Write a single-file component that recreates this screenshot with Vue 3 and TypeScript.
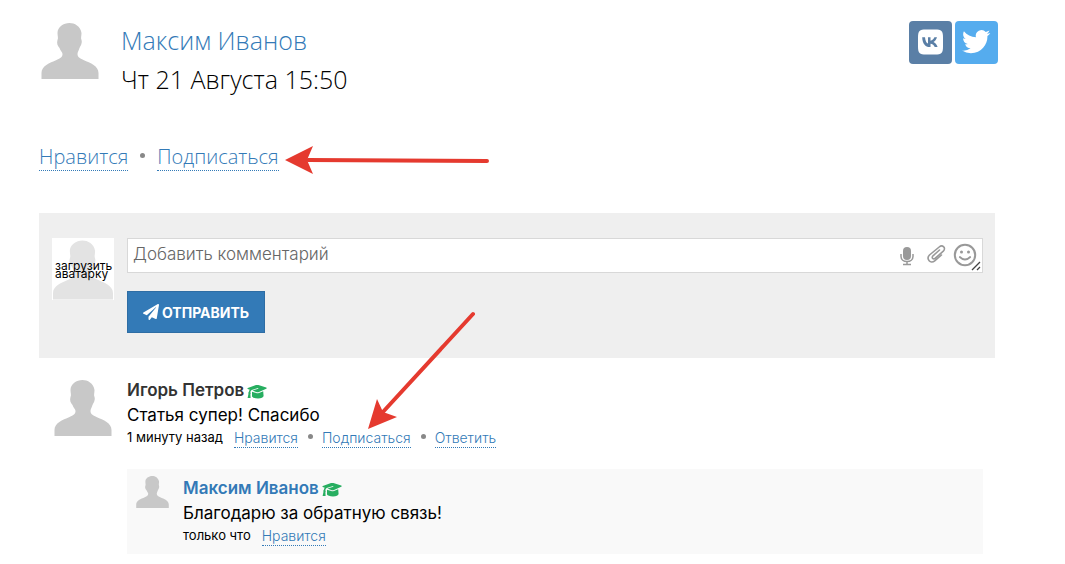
<script setup lang="ts">
import { ref } from 'vue'

const draft = ref('')
const articleActions: string[] = ['Нравится', 'Подписаться']
const commentActions: string[] = ['Нравится', 'Подписаться', 'Ответить']
</script>

<template>
  <main class="page">
    <svg class="defs" aria-hidden="true">
      <symbol id="person" viewBox="0 0 57 56">
        <path d="M28 0C33 0 39 3 40 10C40 13 39 15 40 17C41 20 39 23 38 25C37 28 36 29 36 31C36 34 38 35 42 37C49 40 57 43 57 50V56H0V50C0 43 8 40 15 37C19 35 21 34 21 31C21 29 19 28 18 25C16 23 15 20 16 17C17 15 16 13 16 10C16 4 22 0 28 0Z" />
      </symbol>
      <symbol id="cap" viewBox="0 0 20 15">
        <path d="M.8 4L9 1.100Q10.200 .7 11.400 1.100L19.200 3.600Q20.200 4.200 19.200 4.800L12 8Q10.600 8.500 9.200 8L5.500 6.600L11.400 4.700L11.100 4.100L4.600 5.900Q3.500 6.700 3.300 8.200Q4.200 9 3.400 9.900L3.600 14H.6L1.500 9.800Q.9 8.800 1.800 8.100Q1.900 6.600 2.800 5.700L.8 5.100Q0 4.500 .8 4ZM5 7.700L9.200 9.100Q10.600 9.500 12 9L16.200 7.200L16.600 12Q16 14.200 11 14.400Q6 14.300 5 12.500Z" />
      </symbol>
    </svg>

    <header class="head">
      <svg class="avatar" aria-hidden="true"><use href="#person" /></svg>
      <div class="who">
        <a href="#author">Максим Иванов</a>
        <time>Чт 21 Августа 15:50</time>
      </div>
      <nav class="share">
        <a class="vk" href="#vk" aria-label="ВКонтакте">
          <svg viewBox="0 0 43 43" aria-hidden="true">
            <path fill="#fff" d="M17 8.500H26C32.500 8.500 34 10 34 16.500V25.500C34 32 32.500 33.500 26 33.500H17C10.500 33.500 9 32 9 25.500V16.500C9 10 10.500 8.500 17 8.500Z" />
            <path fill="#5a7fa6" d="M13.200 16.200H16C16.300 20.200 17.600 22.100 19 22.600V16.200H21.500V19.700C23.200 19.500 24.700 17.900 25.400 16.200H28C27.400 18.500 25.900 20.200 24.500 21.100C26.100 21.900 27.800 23.400 28.600 26H25.700C25 24.200 23.500 22.900 21.500 22.700V26H20.800C16.300 26 13.400 22.600 13.200 16.200Z" />
          </svg>
        </a>
        <a class="tw" href="#twitter" aria-label="Twitter">
          <svg viewBox="0 0 43 43" aria-hidden="true">
            <path fill="#fff" transform="translate(7 6.500) scale(1.180)" d="M23.950 4.570a10 10 0 0 1-2.820.770 4.960 4.960 0 0 0 2.160-2.720c-.950.550-2 .950-3.130 1.180a4.920 4.920 0 0 0-8.380 4.480C7.690 8.090 4.070 6.130 1.640 3.160a4.820 4.820 0 0 0-.670 2.480c0 1.710.870 3.210 2.190 4.100a4.900 4.900 0 0 1-2.230-.620v.060a4.920 4.920 0 0 0 3.950 4.830 5 5 0 0 1-2.210.080 4.940 4.940 0 0 0 4.600 3.420A9.870 9.870 0 0 1 0 19.540a13.990 13.990 0 0 0 7.550 2.210c9.050 0 14-7.500 14-13.980 0-.210 0-.420-.020-.630a9.940 9.940 0 0 0 2.460-2.550z" />
          </svg>
        </a>
      </nav>
    </header>

    <div class="article-actions">
      <a v-for="item in articleActions" :key="item" href="#article">{{ item }}</a>
    </div>

    <form class="composer" @submit.prevent>
      <button type="button" class="upload">
        <svg aria-hidden="true"><use href="#person" /></svg>
        <span>загрузить аватарку</span>
      </button>
      <div class="fields">
        <div class="box">
          <textarea v-model="draft" rows="1" aria-label="Добавить комментарий" placeholder="Добавить комментарий"></textarea>
          <button type="button" class="tool mic" aria-label="Голосовой ввод">
            <svg viewBox="0 0 14 20" width="14" height="20" aria-hidden="true">
              <rect x="3" y="1" width="8" height="13" rx="4" fill="#999" />
              <path d="M1 8V10.500C1 13.500 3.500 15.500 7 15.500S13 13.500 13 10.500V8M7 15.500V18M3 18.500H11" fill="none" stroke="#999" stroke-width="1.500" />
            </svg>
          </button>
          <button type="button" class="tool clip" aria-label="Прикрепить файл">
            <svg viewBox="0 0 20 20" width="20" height="20" aria-hidden="true">
              <path d="M13.500 6L7 11.800C5 13.800 7.300 16 9.300 14.200L17.300 7.200C20.500 4 16.500 .2 13.200 3L3.500 11C-.2 14.800 4.500 20.500 8.700 16.800L15.500 11" fill="none" stroke="#999" stroke-width="1.600" stroke-linecap="round" />
            </svg>
          </button>
          <button type="button" class="tool smile" aria-label="Смайлы">
            <svg viewBox="0 0 24 24" width="24" height="24" aria-hidden="true">
              <circle cx="12" cy="12" r="10.200" fill="none" stroke="#999" stroke-width="2" />
              <circle cx="8.500" cy="9" r="1.500" fill="#999" />
              <circle cx="15.500" cy="9" r="1.500" fill="#999" />
              <path d="M6.800 14Q12 19 17.200 14" fill="none" stroke="#999" stroke-width="1.800" stroke-linecap="round" />
            </svg>
          </button>
          <svg class="grip" viewBox="0 0 10 10" aria-hidden="true">
            <path d="M1 9L9 1M6 9L9 6" stroke="#444" stroke-width="1.300" />
          </svg>
        </div>
        <button type="submit" class="send">
          <svg viewBox="0 0 512 512" width="16" height="16" aria-hidden="true">
            <path fill="#fff" d="M476 3.200L12.500 270.600c-18.100 10.400-15.800 35.600 2.200 43.200L121 358.400l287.300-253.200c5.500-4.900 13.300 2.600 8.600 8.300L176 407v80.500c0 23.600 28.500 32.900 42.500 15.800L282 426l124.600 52.200c14.200 6 30.400-2.900 33-18.200l72-432C515 7.800 493.300-6.800 476 3.200z" />
          </svg>
          ОТПРАВИТЬ
        </button>
      </div>
    </form>

    <article class="comment">
      <svg class="avatar" aria-hidden="true"><use href="#person" /></svg>
      <div class="content">
        <h3>Игорь Петров<svg class="cap" aria-hidden="true"><use href="#cap" /></svg></h3>
        <p>Статья супер! Спасибо</p>
        <div class="meta">
          <time>1 минуту назад</time>
          <a v-for="item in commentActions" :key="item" href="#comment">{{ item }}</a>
        </div>
        <article class="reply">
          <svg class="avatar" aria-hidden="true"><use href="#person" /></svg>
          <div class="content">
            <h3><a href="#author">Максим Иванов</a><svg class="cap" aria-hidden="true"><use href="#cap" /></svg></h3>
            <p>Благодарю за обратную связь!</p>
            <div class="meta">
              <time>только что</time>
              <a href="#reply">Нравится</a>
            </div>
          </div>
        </article>
      </div>
    </article>

    <svg class="arrows" width="500" height="440" aria-hidden="true">
      <path d="M487 161L308 160M473 314L382 413" stroke="#e53a2f" stroke-width="4" stroke-linecap="round" />
      <path d="M285 160L313 146L307 160L313 174ZM368 429L377 399L383 412L397 417Z" fill="#e53a2f" />
    </svg>
  </main>
</template>

<style>
body {
  margin: 0;
  background: #fff;
}
</style>

<style scoped>
* {
  box-sizing: border-box;
}
.page {
  position: relative;
  padding: 21px 67px 11px 39px;
  font-family: Inter, "Noto Sans", sans-serif;
  color: #000;
}
a {
  color: #337ab7;
  text-decoration: none;
}
button {
  font-family: inherit;
  cursor: pointer;
}
.defs {
  position: absolute;
  width: 0;
  height: 0;
}
.avatar {
  flex: none;
  width: 58px;
  height: 56px;
  fill: #c8c8c8;
}
.head {
  display: flex;
  align-items: flex-start;
}
.head .avatar {
  margin: 2px 22px 0 2px;
}
.who {
  display: flex;
  flex: 1;
  flex-direction: column;
  font: 300 25px/39px "Open Sans", sans-serif;
}
.share {
  display: flex;
  gap: 3px;
}
.share a {
  width: 43px;
  height: 43px;
  border-radius: 4px;
}
.share svg {
  display: block;
}
.vk {
  background: #5a7fa6;
}
.tw {
  background: #55acee;
}
.article-actions {
  display: flex;
  margin-top: 46px;
  font: 300 20px/24px "Open Sans", sans-serif;
}
.article-actions a,
.meta a {
  border-bottom: 1px dotted #337ab7;
}
.article-actions a {
  padding-bottom: 1px;
}
.article-actions a + a,
.meta a + a {
  position: relative;
}
.article-actions a + a {
  margin-left: 29px;
}
.article-actions a + a::before,
.meta a + a::before {
  position: absolute;
  width: 5px;
  height: 5px;
  border-radius: 50%;
  background: #888;
  content: "";
}
.article-actions a + a::before {
  top: 8px;
  left: -17px;
}
.composer {
  display: flex;
  gap: 13px;
  margin: 42px 3px 0 0;
  padding: 25px 12px 25px 13px;
  background: #efefef;
}
.upload {
  position: relative;
  flex: none;
  width: 62px;
  height: 62px;
  padding: 2px 1px 0;
  border: 0;
  background: #fff;
}
.upload svg {
  display: block;
  width: 60px;
  height: 60px;
  fill: #e3e3e3;
}
.upload span {
  position: absolute;
  top: 24px;
  left: 3px;
  width: 58px;
  font-size: 12px;
  line-height: 8px;
  text-align: left;
}
.fields {
  flex: 1;
}
.box {
  position: relative;
  display: flex;
  align-items: center;
  height: 35px;
  padding-right: 5px;
  border: 1px solid #d8d8d8;
  background: #fff;
}
textarea {
  flex: 1;
  height: 33px;
  padding: 3px 5px;
  border: 0;
  outline: 0;
  background: none;
  font: 300 17px/24px Inter, sans-serif;
  resize: none;
}
textarea::placeholder {
  color: #666;
}
.tool {
  display: flex;
  padding: 0;
  border: 0;
  background: none;
}
.clip {
  margin: 0 7px 4px 12px;
}
.smile {
  margin-bottom: 2px;
}
.grip {
  position: absolute;
  right: 1px;
  bottom: 1px;
  width: 10px;
  height: 10px;
}
.send {
  display: flex;
  align-items: center;
  gap: 3px;
  height: 42px;
  margin-top: 18px;
  padding: 0 15px;
  border: 1px solid #2e6da4;
  background: #337ab7;
  color: #fff;
  font-size: 14px;
  font-weight: 700;
}
.comment {
  display: flex;
  margin: 20px 15px 0 0;
}
.comment > .avatar {
  margin: 2px 15px 0;
}
.comment > .content {
  flex: 1;
}
h3 {
  display: flex;
  align-items: center;
  gap: 3px;
  margin: 0;
  color: #333;
  font-size: 17px;
  font-weight: 600;
  line-height: 25px;
}
.cap {
  width: 20px;
  height: 15px;
  margin-top: 2px;
  fill: #27ae60;
}
p {
  margin: 0;
  font-size: 17px;
  line-height: 25px;
}
.meta {
  display: flex;
  font-size: 14px;
  font-weight: 300;
  line-height: 19px;
}
.meta time {
  margin-right: 11px;
  font-size: 13px;
  font-weight: 400;
}
.meta a + a {
  margin-left: 24px;
}
.meta a + a::before {
  top: 6px;
  left: -14px;
}
.reply {
  display: flex;
  gap: 14px;
  margin-top: 21px;
  padding: 7px 9px 8px;
  background: #f9f9f9;
}
.reply .avatar {
  width: 33px;
  height: 32px;
}
.arrows {
  position: absolute;
  top: 0;
  left: 0;
  pointer-events: none;
}
</style>
